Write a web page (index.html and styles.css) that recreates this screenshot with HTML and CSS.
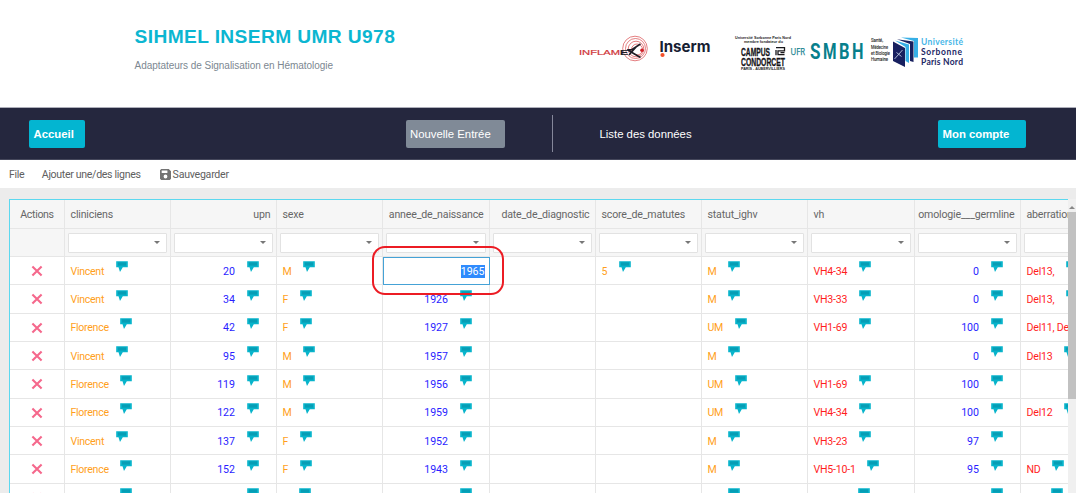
FILE: index.html
```html
<!DOCTYPE html>
<html lang="fr">
<head>
<meta charset="utf-8">
<title>SIHMEL INSERM UMR U978</title>
<link rel="stylesheet" href="styles.css">
</head>
<body>
<svg class="defs" width="0" height="0">
  <symbol id="c" viewBox="0 0 12 11"><path fill="#08b4cb" d="M.2.2h11.6v6.1H6.800L4 10.900 2.500 6.300H.2z"/><path fill="#069db5" d="M2 1.400h8v3.200H2z"/></symbol>
  <symbol id="x" viewBox="0 0 12 12"><path d="M1.4 1.4l9.2 9.2M10.6 1.4L1.4 10.6" stroke="#f5688c" stroke-width="2.1" fill="none"/></symbol>
</svg>
<header class="top">
  <div class="brand">
    <h1>SIHMEL INSERM UMR U978</h1>
    <p>Adaptateurs de Signalisation en Hématologie</p>
  </div>
  <svg class="logos" width="400" height="50" viewBox="570 28 400 50">
    <g fill="none" stroke="#d9474b" stroke-width=".7">
      <circle cx="635" cy="48.500" r="12.300"/><circle cx="635.500" cy="48.500" r="10"/><circle cx="636" cy="49" r="7.800"/><circle cx="637" cy="49.500" r="5.500"/>
    </g>
    <text class="inflam" x="579" y="54.600" textLength="41" lengthAdjust="spacingAndGlyphs">INFLAM</text>
    <text class="inflam ex" x="620" y="54.600" textLength="8" lengthAdjust="spacingAndGlyphs">E</text>
    <path d="M627 50l5-.5L640.500 44M628 50l4 2.500 8.500 5M629 55l8-9" fill="none" stroke="#1d1d25" stroke-width="1.500"/>
    <circle cx="642" cy="50.300" r="1.800" fill="#cf2027"/>
    <text class="inserm" x="659.500" y="51.500" textLength="51" lengthAdjust="spacingAndGlyphs">Inserm</text>
    <circle cx="662.500" cy="55" r="2.100" fill="#f4502a"/>
    <g class="tiny">
      <text x="735" y="38.700" textLength="56" lengthAdjust="spacingAndGlyphs">Université Sorbonne Paris Nord</text>
      <text x="744" y="43.300" textLength="39" lengthAdjust="spacingAndGlyphs">membre fondateur du</text>
      <text x="741" y="70.300" textLength="44" lengthAdjust="spacingAndGlyphs">PARIS - AUBERVILLIERS</text>
    </g>
    <g class="campus">
      <text x="741" y="55.500" textLength="29" lengthAdjust="spacingAndGlyphs">CAMPUS</text>
      <text x="741" y="65.800" textLength="44" lengthAdjust="spacingAndGlyphs">CONDORCET</text>
    </g>
    <path d="M776 47.700h8.500v3.100h-6.500v3.900h6.500M784.500 52.700h-4M776 50v5.300" fill="none" stroke="#17171b" stroke-width="1.300"/>
    <text class="ufr" x="790.500" y="55.300" textLength="14.500" lengthAdjust="spacingAndGlyphs">UFR</text>
    <g class="smbh">
      <text x="810" y="59.200" textLength="10.500" lengthAdjust="spacingAndGlyphs">S</text>
      <text x="823" y="59.200" textLength="13.500" lengthAdjust="spacingAndGlyphs">M</text>
      <text x="839" y="59.200" textLength="10.500" lengthAdjust="spacingAndGlyphs">B</text>
      <text x="852" y="59.200" textLength="11.500" lengthAdjust="spacingAndGlyphs">H</text>
    </g>
    <g class="sante">
      <text x="871" y="42.200" textLength="12" lengthAdjust="spacingAndGlyphs">Santé,</text>
      <text x="871" y="48.600" textLength="17" lengthAdjust="spacingAndGlyphs">Médecine</text>
      <text x="871" y="55" textLength="19" lengthAdjust="spacingAndGlyphs">et Biologie</text>
      <text x="871" y="61.300" textLength="17" lengthAdjust="spacingAndGlyphs">Humaine</text>
    </g>
    <path d="M901 37.500l17 .5v19.500h-4V41z" fill="#36afe6"/>
    <path d="M897 39.200l16.500 2.300V62l-3.500-1V44z" fill="#17205f"/>
    <path d="M895 40.500l14 4V63l-3.500-2V47z" fill="#36afe6"/>
    <path d="M893 41.500l12 6.500v19l-12-6z" fill="#17205f"/>
    <path d="M894.500 59l8-9M896.500 52.500l5 4" stroke="#b9c5df" stroke-width=".9"/>
    <g class="usp">
      <text class="cyan" x="921" y="45" textLength="42" lengthAdjust="spacing">Université</text>
      <text x="921" y="55" textLength="41" lengthAdjust="spacing">Sorbonne</text>
      <text x="921" y="65" textLength="42" lengthAdjust="spacing">Paris Nord</text>
    </g>
  </svg>
</header>
<nav class="nav">
  <a class="btn home">Accueil</a>
  <a class="btn entry">Nouvelle Entrée</a>
  <span class="rule"></span>
  <a class="list">Liste des données</a>
  <a class="btn account">Mon compte</a>
</nav>
<div class="tools">
  <span>File</span><span class="add">Ajouter une/des lignes</span>
  <svg width="11" height="11" viewBox="0 0 11 11"><path fill="#737373" fill-rule="evenodd" d="M1.200 0h7.600L11 2.200v7.600L9.800 11H1.200L0 9.800V1.200zM1.700 1.500v2.400h5.700V1.500zM5.500 5.600a1.900 1.900 0 100 3.800 1.900 1.900 0 000-3.800z"/></svg>
  <span class="save">Sauvegarder</span>
</div>
<main class="area">
  <div class="grid">
    <div class="row head"><span class="mid">Actions</span><span>cliniciens</span><span class="r">upn</span><span>sexe</span><span class="r">annee_de_naissance</span><span class="r">date_de_diagnostic</span><span>score_de_matutes</span><span>statut_ighv</span><span>vh</span><span class="r">omologie___germline</span><span>aberrations</span></div>
    <div class="row filters"><span></span><span><i></i></span><span><i></i></span><span><i></i></span><span><i></i></span><span><i></i></span><span><i></i></span><span><i></i></span><span><i></i></span><span><i></i></span><span><i></i></span></div>
    <div class="row"><span class="mid"><svg><use href="#x"/></svg></span><span class="o">Vincent<svg><use href="#c"/></svg></span><span class="n">20<svg><use href="#c"/></svg></span><span class="o">M<svg><use href="#c"/></svg></span><span class="edit"><b>1965</b></span><span></span><span class="o">5<svg><use href="#c"/></svg></span><span class="o">M<svg><use href="#c"/></svg></span><span class="d">VH4-34<svg><use href="#c"/></svg></span><span class="n">0<svg><use href="#c"/></svg></span><span class="d">Del13,<svg><use href="#c"/></svg></span></div>
    <div class="row"><span class="mid"><svg><use href="#x"/></svg></span><span class="o">Vincent<svg><use href="#c"/></svg></span><span class="n">34<svg><use href="#c"/></svg></span><span class="o">F<svg><use href="#c"/></svg></span><span class="n">1926<svg><use href="#c"/></svg></span><span></span><span></span><span class="o">M<svg><use href="#c"/></svg></span><span class="d">VH3-33<svg><use href="#c"/></svg></span><span class="n">0<svg><use href="#c"/></svg></span><span class="d">Del13,<svg><use href="#c"/></svg></span></div>
    <div class="row"><span class="mid"><svg><use href="#x"/></svg></span><span class="o">Florence<svg><use href="#c"/></svg></span><span class="n">42<svg><use href="#c"/></svg></span><span class="o">F<svg><use href="#c"/></svg></span><span class="n">1927<svg><use href="#c"/></svg></span><span></span><span></span><span class="o">UM<svg><use href="#c"/></svg></span><span class="d">VH1-69<svg><use href="#c"/></svg></span><span class="n">100<svg><use href="#c"/></svg></span><span class="d">Del11, Del13</span></div>
    <div class="row"><span class="mid"><svg><use href="#x"/></svg></span><span class="o">Vincent<svg><use href="#c"/></svg></span><span class="n">95<svg><use href="#c"/></svg></span><span class="o">M<svg><use href="#c"/></svg></span><span class="n">1957<svg><use href="#c"/></svg></span><span></span><span></span><span class="o">M<svg><use href="#c"/></svg></span><span></span><span class="n">0<svg><use href="#c"/></svg></span><span class="d">Del13<svg><use href="#c"/></svg></span></div>
    <div class="row"><span class="mid"><svg><use href="#x"/></svg></span><span class="o">Florence<svg><use href="#c"/></svg></span><span class="n">119<svg><use href="#c"/></svg></span><span class="o">M<svg><use href="#c"/></svg></span><span class="n">1956<svg><use href="#c"/></svg></span><span></span><span></span><span class="o">UM<svg><use href="#c"/></svg></span><span class="d">VH1-69<svg><use href="#c"/></svg></span><span class="n">100<svg><use href="#c"/></svg></span><span></span></div>
    <div class="row"><span class="mid"><svg><use href="#x"/></svg></span><span class="o">Florence<svg><use href="#c"/></svg></span><span class="n">122<svg><use href="#c"/></svg></span><span class="o">M<svg><use href="#c"/></svg></span><span class="n">1959<svg><use href="#c"/></svg></span><span></span><span></span><span class="o">UM<svg><use href="#c"/></svg></span><span class="d">VH4-34<svg><use href="#c"/></svg></span><span class="n">100<svg><use href="#c"/></svg></span><span class="d">Del12<svg><use href="#c"/></svg></span></div>
    <div class="row"><span class="mid"><svg><use href="#x"/></svg></span><span class="o">Vincent<svg><use href="#c"/></svg></span><span class="n">137<svg><use href="#c"/></svg></span><span class="o">F<svg><use href="#c"/></svg></span><span class="n">1952<svg><use href="#c"/></svg></span><span></span><span></span><span class="o">M<svg><use href="#c"/></svg></span><span class="d">VH3-23<svg><use href="#c"/></svg></span><span class="n">97<svg><use href="#c"/></svg></span><span></span></div>
    <div class="row"><span class="mid"><svg><use href="#x"/></svg></span><span class="o">Florence<svg><use href="#c"/></svg></span><span class="n">152<svg><use href="#c"/></svg></span><span class="o">F<svg><use href="#c"/></svg></span><span class="n">1943<svg><use href="#c"/></svg></span><span></span><span></span><span class="o">M<svg><use href="#c"/></svg></span><span class="d">VH5-10-1<svg><use href="#c"/></svg></span><span class="n">95<svg><use href="#c"/></svg></span><span class="d">ND<svg><use href="#c"/></svg></span></div>
    <div class="row last"><span class="mid"><svg><use href="#x"/></svg></span><span class="o"><em class="w38"></em><svg><use href="#c"/></svg></span><span class="n"><svg><use href="#c"/></svg></span><span class="o"><em class="w5"></em><svg><use href="#c"/></svg></span><span class="n"><svg><use href="#c"/></svg></span><span></span><span></span><span class="o"><em class="w8"></em><svg><use href="#c"/></svg></span><span class="d"><em class="w32"></em><svg><use href="#c"/></svg></span><span class="n"><svg><use href="#c"/></svg></span><span class="d"><em class="w13"></em><svg><use href="#c"/></svg></span></div>
  </div>
  <div class="scroll"><i class="up"></i><i class="thumb"></i></div>
  <div class="mark"></div>
</main>
</body>
</html>
```
FILE: styles.css
```css
* { box-sizing: border-box; }
body { margin: 0; width: 1076px; height: 493px; overflow: hidden; background: #fff; font-family: "Liberation Sans", Arial, sans-serif; display: flex; flex-direction: column; }
.defs { position: absolute; }
.top { height: 107px; flex: none; display: flex; padding: 26px 0 0 134.5px; }
.brand { width: 435.5px; }
h1 { margin: 0; font-size: 19.200px; line-height: 22px; color: #0cb6d1; white-space: nowrap; letter-spacing: .38px; }
.brand p { margin: 11px 0 0; font-size: 10px; line-height: 14px; color: #7c8791; letter-spacing: -.04px; }
.logos { margin-top: 2px; }
.inflam { font-size: 7.500px; fill: #cf3439; stroke: #cf3439; stroke-width: .2; }
.ex { fill: #1d1d25; stroke: #1d1d25; font-weight: bold; }
.inserm { font: bold 15px Inter, sans-serif; fill: #162032; }
.tiny { font: bold 4.2px "Liberation Sans", sans-serif; fill: #222; }
.campus { font: bold 11px "Liberation Sans", sans-serif; fill: #141418; stroke: #141418; stroke-width: .3; }
.ufr { font: 9.500px "Open Sans", sans-serif; fill: #19848f; stroke: #19848f; stroke-width: .25; }
.smbh { font: bold 22px Roboto, sans-serif; fill: #087f8c; }
.sante { font: 5.5px Roboto, sans-serif; fill: #333; stroke: #333; stroke-width: .15; }
.usp { font: bold 8.500px Lato, sans-serif; fill: #1c2865; }
.cyan { fill: #45b6e8; }

.nav { height: 53px; flex: none; display: flex; align-items: center; background: #25273e; border-top: 1px solid #aeafba; border-bottom: 1px solid #45475b; color: #fff; font-size: 11.350px; padding-left: 29px; white-space: nowrap; }
.btn { height: 28px; line-height: 28px; border-radius: 2px; padding-left: 4.5px; background: #03b5d1; font-weight: bold; }
.home { width: 55.5px; }
.entry { width: 99px; margin-left: 321px; background: #808a97; font-weight: normal; }
.rule { width: 1px; height: 37px; background: #85879a; margin-left: 47.500px; }
.list { width: 338.500px; margin-left: 46.500px; }
.account { width: 87.500px; }

.tools { height: 28px; flex: none; display: flex; align-items: center; padding-left: 9px; font: 10.6px Roboto, sans-serif; letter-spacing: -.33px; color: #606060; white-space: nowrap; }
.add { margin-left: 17.500px; margin-right: 19px; }
.save { letter-spacing: -.25px; }
.tools svg { margin-right: 2px; }

.area { height: 305px; flex: none; background: #ececec; padding: 11px 0 0 9px; display: flex; position: relative; }
.grid { width: 1059px; flex: none; overflow: hidden; border-left: 1px solid #5cd8ef; border-top: 1px solid #5cd8ef; background: #fff; font: 10.6px Roboto, sans-serif; }
.row { display: grid; grid-template-columns: 55px 106px 106px 106px 107px 106px 106px 106px 107px 106px 106px; height: 28.330px; }
.row > span { display: flex; align-items: center; border-right: 1px solid #e6e6e6; border-bottom: 1px solid #e6e6e6; padding: 1px 5.500px 0; white-space: nowrap; min-width: 0; }
.row > .mid { justify-content: center; }
.head, .filters { background: #f6f6f6; color: #666; }
.head { height: 29px; letter-spacing: -.17px; }
.head > .mid { letter-spacing: -.35px; }
.filters { height: 28px; }
.head > .r { justify-content: flex-end; }
.row.filters > span { padding: 0 3px 0 3px; }
.filters i { flex: 1; height: 20px; background: #fff; border: 1px solid #e2e2e2; border-radius: 1px; display: flex; align-items: center; justify-content: flex-end; padding-right: 6.500px; }
.filters i::after { content: ""; border: 3px solid transparent; border-top: 3px solid #777; border-bottom: 0; }
.row svg { width: 12px; height: 11px; margin-left: 11.500px; margin-top: -8.500px; flex: none; }
.row > .mid svg { width: 12px; height: 12px; margin: 0; }
.o { color: #ff9f1c; letter-spacing: -.3px; }
.d { color: #ff1e1e; letter-spacing: -.22px; }
.row > .n { color: #2a1eff; justify-content: flex-end; padding-right: 17.500px; }
.row > .edit { border: 1px solid #45a2d6; margin-left: 0; justify-content: flex-end; padding: 0 4.500px; }
.edit b { background: #2f8bfd; color: #fff; font-weight: normal; line-height: 13px; }
.w38 { width: 38px; }
.w5 { width: 5px; }
.w8 { width: 8.500px; }
.w32 { width: 32.500px; }
.w13 { width: 13px; }
.scroll { width: 8px; background: #f0f0f0; display: flex; flex-direction: column; align-items: center; }
.up { margin: 7px 0 3px; border: 3px solid transparent; border-bottom-color: #888; border-top: 0; }
.thumb { width: 8px; height: 187px; background: #c1c1c1; }
.mark { position: absolute; left: 372px; top: 58px; width: 132px; height: 49px; border: 2.500px solid #ec1c24; border-radius: 13px; }
```
